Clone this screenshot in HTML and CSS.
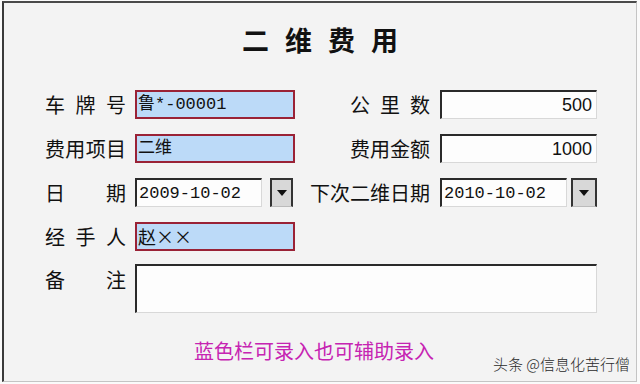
FILE: index.html
```html
<!DOCTYPE html>
<html lang="zh-CN">
<head>
    <meta charset="UTF-8">
    <title>二维费用</title>
    <link rel="stylesheet" href="styles.css">
</head>
<body>
    <div class="frame">
        <h1 class="title">二维费用</h1>

        <div class="form">
            <label class="lbl"><span>车牌号</span></label>
            <div class="field blue">鲁*-00001</div>
            <label class="lbl-r"><span>公里数</span></label>
            <div class="field white num">500</div>

            <label class="lbl"><span>费用项目</span></label>
            <div class="field blue">二维</div>
            <label class="lbl-r"><span>费用金额</span></label>
            <div class="field white num">1000</div>

            <label class="lbl"><span>日期</span></label>
            <div class="date">
                <div class="field white date-box">2009-10-02</div>
                <div class="drop drop-l"><i></i></div>
            </div>
            <label class="lbl-r"><span class="free">下次二维日期</span></label>
            <div class="date">
                <div class="field white date-box">2010-10-02</div>
                <div class="drop drop-r"><i></i></div>
            </div>

            <label class="lbl"><span>经手人</span></label>
            <div class="field blue cjk">赵××</div>
            <div></div>
            <div></div>

            <label class="lbl top"><span>备注</span></label>
            <div class="field white memo"></div>
        </div>

        <p class="hint">蓝色栏可录入也可辅助录入</p>
        <div class="mark">头条 @信息化苦行僧</div>
    </div>
</body>
</html>
```

FILE: styles.css
```css
html, body {
    margin: 0;
    background: #fafafa;
}
body {
    font-family: "Noto Sans CJK SC", sans-serif;
    color: #111;
}
.frame {
    position: relative;
    box-sizing: border-box;
    height: 381px;
    margin: 1px 3px 2px 2px;
    background: #f3f3f3;
    border-top: 2px solid #4a4a4a;
    border-left: 2px solid #3a3a3a;
    border-right: 1px solid #c4c4c4;
    border-bottom: 1px solid #c4c4c4;
    padding: 22px 0 0 41px;
}
.title {
    margin: 0 0 35px -41px;
    font-size: 27px;
    line-height: 30px;
    font-weight: bold;
    text-align: center;
    letter-spacing: 16px;
    padding-left: 16px;
}
.form {
    display: grid;
    grid-template-columns: 90px 160px 145px 157px;
    grid-auto-rows: 29px;
    row-gap: 15px;
    align-items: center;
}
.lbl span,
.lbl-r span {
    display: block;
    font-size: 20px;
    line-height: 24px;
    text-align-last: justify;
}
.lbl span {
    width: 81px;
}
.lbl-r {
    display: flex;
    justify-content: flex-end;
    padding-right: 10px;
}
.lbl-r span {
    width: 80px;
}
.lbl-r span.free {
    width: auto;
    text-align-last: auto;
}
.lbl.top {
    align-self: start;
    margin-top: 2px;
}
.field {
    box-sizing: border-box;
    height: 29px;
    font-family: "Liberation Mono", "Noto Sans CJK SC", monospace;
    font-size: 17px;
    line-height: 25px;
    white-space: nowrap;
    overflow: hidden;
}
.field.cjk {
    font-family: "Noto Sans CJK SC", sans-serif;
    font-size: 18px;
}
.blue {
    background: #bcdaf8;
    border: 2px solid #9a2236;
    padding: 0 1px;
}
.white {
    background: #fdfdfd;
    border-top: 2px solid #2a2a2a;
    border-left: 2px solid #2a2a2a;
    border-right: 1px solid #d8d8d8;
    border-bottom: 1px solid #d8d8d8;
    padding: 1px 2px 0;
}
.num {
    text-align: right;
    padding-right: 4px;
    font-family: "Liberation Sans", sans-serif;
    font-size: 18px;
}
.date {
    display: flex;
    align-items: stretch;
    height: 29px;
}
.date-box {
    width: 127px;
}
.drop {
    box-sizing: border-box;
    display: flex;
    align-items: center;
    justify-content: center;
    background: #d8d8d8;
    border: 2px solid #333;
    border-bottom: 1px solid #bbb;
}
.drop-l {
    width: 23px;
    margin-left: 8px;
}
.drop-r {
    width: 26px;
    margin-left: 4px;
}
.drop i {
    display: block;
    width: 0;
    height: 0;
    border-left: 5px solid transparent;
    border-right: 5px solid transparent;
    border-top: 6px solid #111;
}
.memo {
    grid-column: 2 / 5;
    align-self: start;
    height: 49px;
    margin-top: -2px;
}
.form > .memo {
    grid-row: 5;
}
.hint {
    margin: 43px 12px 0 -41px;
    font-size: 20px;
    line-height: 26px;
    color: #c624b2;
    text-align: center;
}
.mark {
    position: absolute;
    right: 6px;
    bottom: 7px;
    font-size: 15px;
    line-height: 20px;
    color: #2a2a2a;
    font-weight: 300;
}
```
